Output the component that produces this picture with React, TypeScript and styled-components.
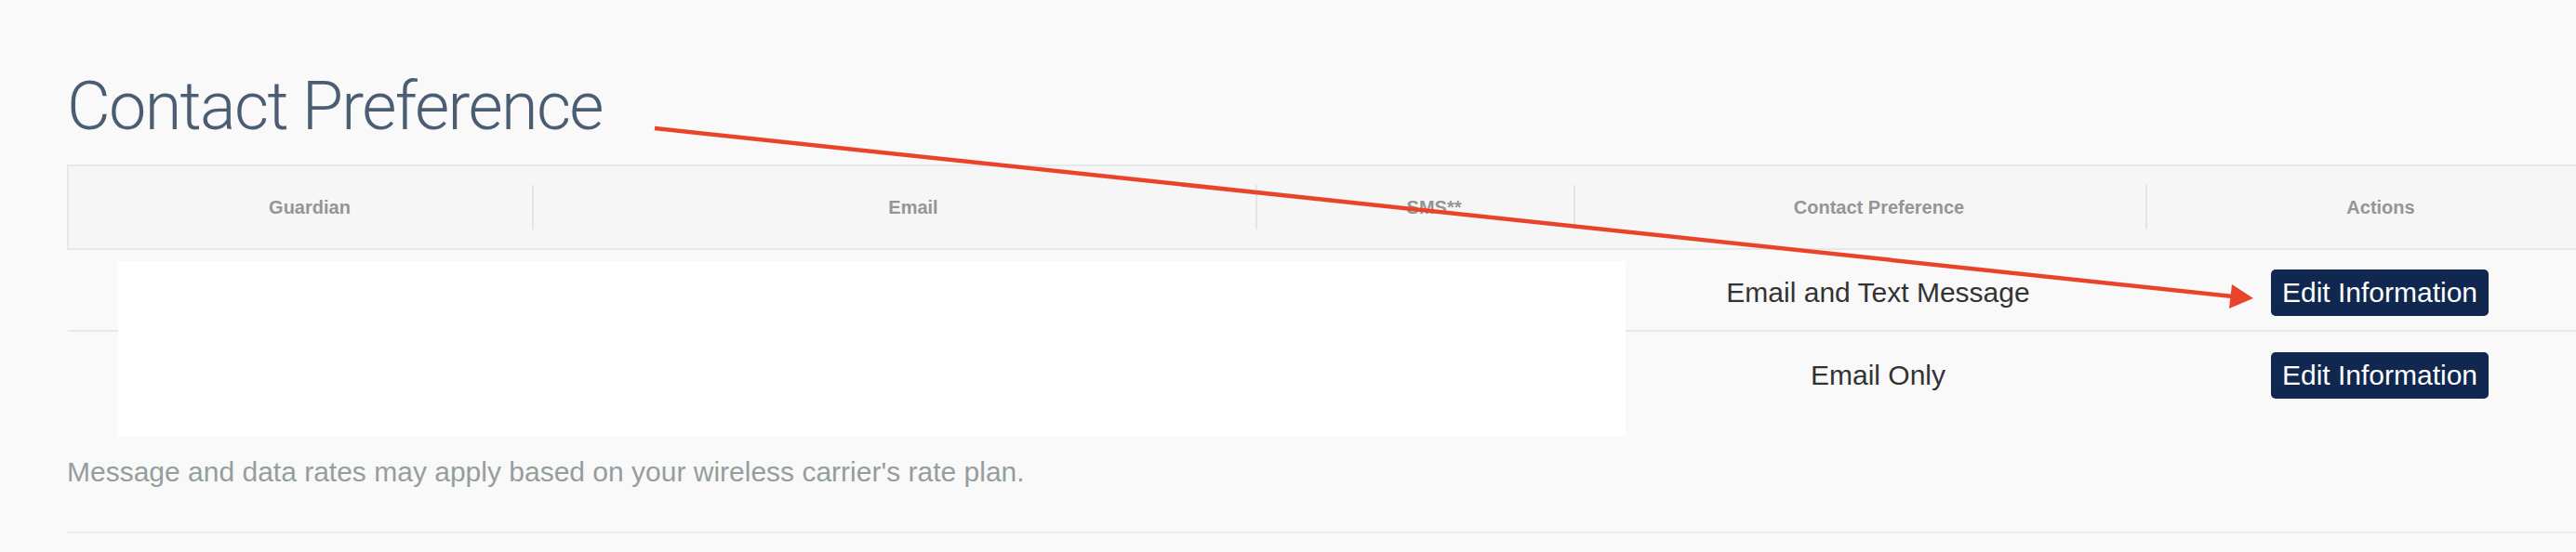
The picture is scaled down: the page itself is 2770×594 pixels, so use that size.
import styled, { createGlobalStyle } from 'styled-components';

const GlobalStyle = createGlobalStyle`
  html, body {
    margin: 0;
    padding: 0;
    background: #f9f9f9;
  }
  body {
    font-family: 'Liberation Sans', Arial, sans-serif;
    overflow: hidden;
  }
`;

const COLUMNS = '498px 778px 342px 615px 464px';

const Page = styled.div`
  position: relative;
  width: 2770px;
  height: 594px;
  padding: 79px 0 0 72px;
  box-sizing: border-box;
  overflow: hidden;
`;

const Title = styled.h1`
  margin: 0 0 26px;
  font-family: Roboto, 'Liberation Sans', sans-serif;
  font-weight: 300;
  font-size: 72px;
  line-height: 72px;
  letter-spacing: -1.7px;
  color: #4a5d72;
`;

const Table = styled.div`
  width: 2699px;
`;

const HeadRow = styled.div`
  display: grid;
  grid-template-columns: ${COLUMNS};
  height: 92px;
  box-sizing: border-box;
  border: 2px solid #e6e9e9;
  border-right: none;
  background: #f6f6f6;
`;

const HeadCell = styled.div<{ $first?: boolean }>`
  display: flex;
  align-items: center;
  justify-content: center;
  margin: 20px 0;
  padding-left: ${(p) => (p.$first ? '20px' : '40px')};
  border-left: ${(p) => (p.$first ? 'none' : '2px solid #e4e4e4')};
  font-size: 20px;
  font-weight: bold;
  color: #959595;
`;

const Row = styled.div<{ $last?: boolean }>`
  display: grid;
  grid-template-columns: ${COLUMNS};
  height: 88px;
  box-sizing: border-box;
  border-left: 2px solid transparent;
  border-bottom: ${(p) => (p.$last ? 'none' : '2px solid #e6eaea')};
`;

const Cell = styled.div<{ $first?: boolean }>`
  display: flex;
  align-items: center;
  justify-content: center;
  padding-top: 5px;
  padding-left: ${(p) => (p.$first ? '20px' : '40px')};
  font-size: 30px;
  color: #333;
`;

const EditButton = styled.button`
  height: 50px;
  padding: 0 12px;
  border: none;
  border-radius: 5px;
  background: #10284f;
  color: #fff;
  font-family: 'Liberation Sans', Arial, sans-serif;
  font-size: 30px;
  line-height: 50px;
  cursor: pointer;
`;

const Note = styled.p`
  margin: 46px 0 0;
  font-size: 30px;
  line-height: 34px;
  color: #959e9e;
`;

const Rule = styled.div`
  margin-top: 47px;
  height: 2px;
  background: #e8ecec;
`;

const Redaction = styled.div`
  position: absolute;
  left: 127px;
  top: 281px;
  width: 1621px;
  height: 188px;
  background: #fff;
`;

const Annotation = styled.svg`
  position: absolute;
  left: 0;
  top: 0;
  pointer-events: none;
`;

const headers = ['Guardian', 'Email', 'SMS**', 'Contact Preference', 'Actions'];

const guardians = [
  { preference: 'Email and Text Message' },
  { preference: 'Email Only' },
];

export default function App() {
  return (
    <>
      <GlobalStyle />
      <Page>
        <Title>Contact Preference</Title>
        <Table>
          <HeadRow>
            {headers.map((h, i) => (
              <HeadCell key={h} $first={i === 0}>
                {h}
              </HeadCell>
            ))}
          </HeadRow>
          {guardians.map((g, i) => (
            <Row key={i} $last={i === guardians.length - 1}>
              <Cell $first />
              <Cell />
              <Cell />
              <Cell>{g.preference}</Cell>
              <Cell>
                <EditButton>Edit Information</EditButton>
              </Cell>
            </Row>
          ))}
        </Table>
        <Note>Message and data rates may apply based on your wireless carrier's rate plan.</Note>
        <Rule />

        <Redaction />

        <Annotation width="2770" height="594" viewBox="0 0 2770 594">
          <line x1="704" y1="138" x2="2401" y2="319" stroke="#e9432a" strokeWidth="4.5" />
          <polygon points="2423,321 2400,306 2397,332" fill="#e9432a" />
        </Annotation>
      </Page>
    </>
  );
}
